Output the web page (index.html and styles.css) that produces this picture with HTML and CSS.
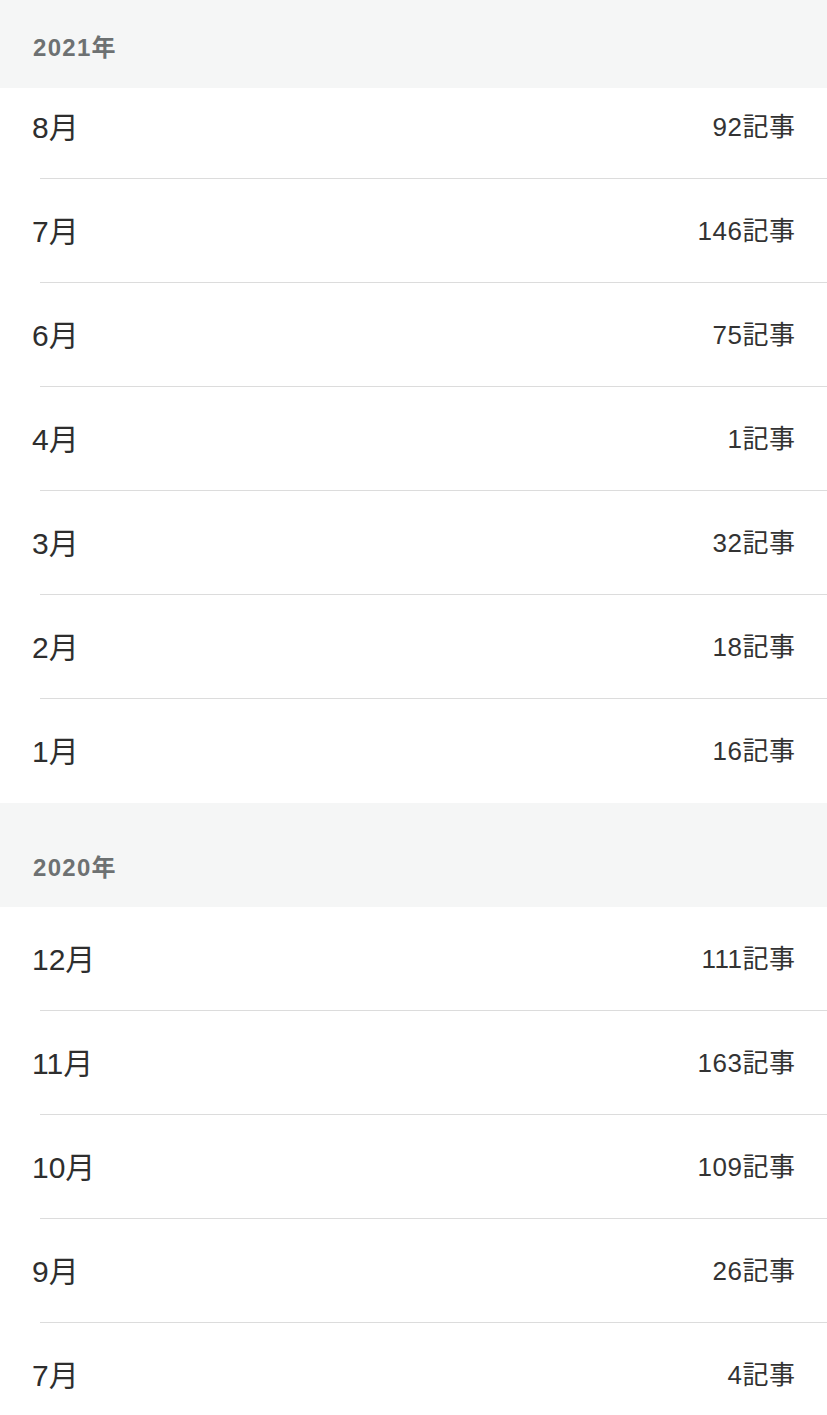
FILE: index.html
```html
<!DOCTYPE html>
<html lang="ja">
<head>
<meta charset="utf-8">
<link rel="stylesheet" href="styles.css">
</head>
<body>
<div class="archive">
  <section class="year-group">
    <h2 class="year year-top">2021年</h2>
    <ul class="months">
      <li class="row first"><span class="month">8月</span><span class="count">92記事</span></li>
      <li class="row"><span class="month">7月</span><span class="count">146記事</span></li>
      <li class="row"><span class="month">6月</span><span class="count">75記事</span></li>
      <li class="row"><span class="month">4月</span><span class="count">1記事</span></li>
      <li class="row"><span class="month">3月</span><span class="count">32記事</span></li>
      <li class="row"><span class="month">2月</span><span class="count">18記事</span></li>
      <li class="row last"><span class="month">1月</span><span class="count">16記事</span></li>
    </ul>
  </section>
  <section class="year-group">
    <h2 class="year">2020年</h2>
    <ul class="months">
      <li class="row"><span class="month">12月</span><span class="count">111記事</span></li>
      <li class="row"><span class="month">11月</span><span class="count">163記事</span></li>
      <li class="row"><span class="month">10月</span><span class="count">109記事</span></li>
      <li class="row"><span class="month">9月</span><span class="count">26記事</span></li>
      <li class="row"><span class="month">7月</span><span class="count">4記事</span></li>
    </ul>
  </section>
</div>
</body>
</html>
```

FILE: styles.css
```css
html, body {
  margin: 0;
  padding: 0;
  background: #ffffff;
}
body {
  font-family: "Liberation Sans", "Noto Sans CJK JP", sans-serif;
  color: #333333;
  overflow: hidden;
}
.archive {
  display: flex;
  flex-direction: column;
}
.year {
  margin: 0;
  height: 104px;
  box-sizing: border-box;
  display: flex;
  align-items: center;
  padding: 20px 33px 0;
  background: #f5f6f6;
  color: #6d7172;
  font-size: 24px;
  font-weight: 700;
  letter-spacing: 1.3px;
  position: relative;
  z-index: 1;
}
.year-top {
  height: 88px;
  padding-top: 3px;
}
.months {
  list-style: none;
  margin: 0;
  padding: 0;
}
.row {
  height: 104px;
  box-sizing: border-box;
  display: flex;
  align-items: center;
  justify-content: space-between;
  padding: 0 32px 5px 32px;
  background: linear-gradient(#dcdcdc, #dcdcdc) no-repeat 40px 100% / calc(100% - 40px) 1px;
}
.row.first {
  margin-top: -13px;
}
.row.last {
  background: none;
}
.month {
  font-size: 30px;
  color: #2e2e2e;
}
.count {
  font-size: 26px;
  letter-spacing: 0.5px;
  margin-right: -0.5px;
  color: #333333;
}
```
